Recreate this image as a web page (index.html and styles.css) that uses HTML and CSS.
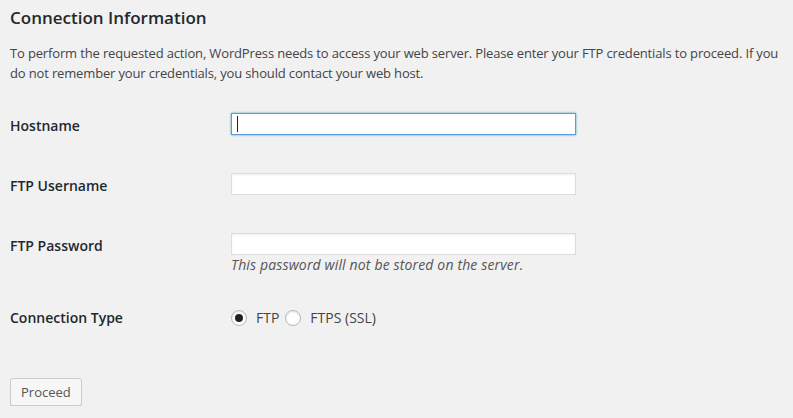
FILE: index.html
```html
<!DOCTYPE html>
<html lang="en">
<head>
<meta charset="utf-8">
<title>Connection Information</title>
<link rel="stylesheet" href="styles.css">
</head>
<body>
<main class="wrap">
  <h2 class="title">Connection Information</h2>
  <p class="intro">To perform the requested action, WordPress needs to access your web server. Please enter your FTP credentials to proceed. If you do not remember your credentials, you should contact your web host.</p>
  <table class="form-table">
    <tbody>
      <tr>
        <th><label for="hostname">Hostname</label></th>
        <td><span class="field"><input id="hostname" class="text is-focus" type="text"><span class="caret"></span></span></td>
      </tr>
      <tr>
        <th><label for="username">FTP Username</label></th>
        <td><input id="username" class="text" type="text"></td>
      </tr>
      <tr>
        <th><label for="password">FTP Password</label></th>
        <td><input id="password" class="text" type="password"><div class="desc">This password will not be stored on the server.</div></td>
      </tr>
      <tr>
        <th>Connection Type</th>
        <td class="radios">
          <label class="opt"><input type="radio" name="ctype" class="radio" checked><span>FTP</span></label>
          <label class="opt"><input type="radio" name="ctype" class="radio"><span>FTPS (SSL)</span></label>
        </td>
      </tr>
    </tbody>
  </table>
  <div class="submit"><button class="button" type="button">Proceed</button></div>
</main>
</body>
</html>
```

FILE: styles.css
```css
html, body {
  margin: 0;
  padding: 0;
  background: #f1f1f1;
}
body {
  font-family: "Open Sans", "Noto Sans", sans-serif;
  font-size: 13px;
  line-height: 20px;
  color: #444;
}
.wrap {
  padding: 8px 10px 0 10px;
}
.title {
  margin: 0;
  font-size: 17px;
  font-weight: 600;
  line-height: 20px;
  color: #23282d;
}
.intro {
  margin: 15px 0 0;
  font-size: 13px;
  line-height: 20px;
  letter-spacing: -0.15px;
  color: #444;
}
.form-table {
  margin-top: 13px;
  border-collapse: collapse;
  border-spacing: 0;
}
.form-table th {
  width: 221px;
  padding: 20px 0 20px 0;
  text-align: left;
  vertical-align: top;
  font-size: 14px;
  font-weight: 600;
  line-height: 20px;
  color: #23282d;
}
.form-table td {
  padding: 17px 0 13px 0;
  vertical-align: top;
}
.field {
  position: relative;
  display: block;
  width: 345px;
}
.text {
  display: block;
  box-sizing: border-box;
  width: 345px;
  height: 22px;
  margin: 0;
  padding: 2px 5px;
  border: 1px solid #ddd;
  background: #fff;
  box-shadow: inset 0 1px 2px rgba(0, 0, 0, 0.07);
  font-family: inherit;
  font-size: 14px;
  color: #32373c;
  outline: none;
}
.text.is-focus {
  border-color: #5b9dd9;
  box-shadow: 0 0 2px rgba(30, 140, 190, 0.8);
}
.caret {
  position: absolute;
  left: 6px;
  top: 3px;
  width: 1px;
  height: 16px;
  background: #222;
}
.desc {
  margin-top: 0;
  font-size: 14px;
  font-style: italic;
  line-height: 20px;
  letter-spacing: 0.15px;
  color: #555;
}
.form-table td.radios {
  padding-top: 20px;
  display: flex;
  align-items: center;
  height: 20px;
  padding-bottom: 20px;
}
.opt {
  display: inline-flex;
  align-items: center;
  font-size: 14px;
  color: #444;
  margin-right: 6px;
}
.radio {
  -webkit-appearance: none;
  appearance: none;
  box-sizing: border-box;
  width: 16px;
  height: 16px;
  margin: 0 9px 0 0;
  border: 1px solid #b4b9be;
  border-radius: 50%;
  background: #fff;
  box-shadow: inset 0 1px 2px rgba(0, 0, 0, 0.1);
  display: inline-flex;
  align-items: center;
  justify-content: center;
}
.radio:checked::before {
  content: "";
  width: 8px;
  height: 8px;
  border-radius: 50%;
  background: #222;
}
.submit {
  margin-top: 30px;
}
.button {
  box-sizing: border-box;
  height: 28px;
  padding: 0 10px;
  border: 1px solid #ccc;
  border-radius: 3px;
  background: #f7f7f7;
  box-shadow: 0 1px 0 #ccc;
  font-family: inherit;
  font-size: 13px;
  line-height: 26px;
  color: #555;
  cursor: pointer;
}
```
